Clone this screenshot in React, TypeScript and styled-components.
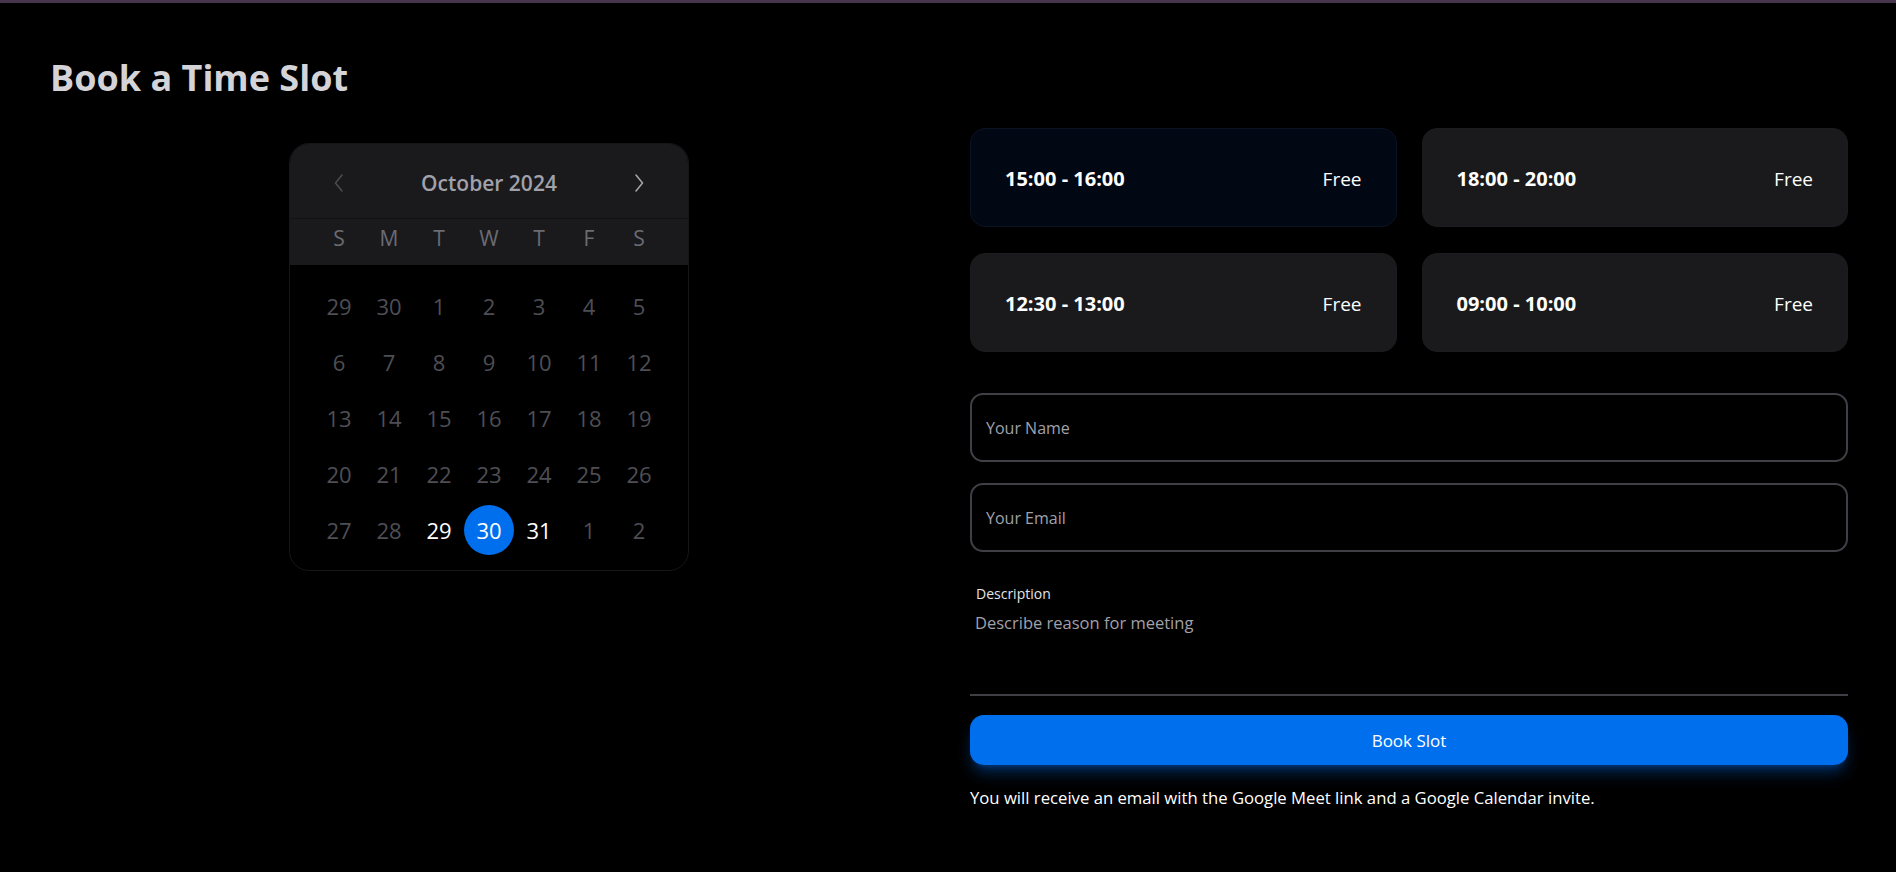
import React from "react";
import styled, { createGlobalStyle } from "styled-components";

const Global = createGlobalStyle`
  html, body { margin: 0; padding: 0; background: #000; }
  body { font-family: "Segoe UI", "Open Sans", "Noto Sans", sans-serif; color: #fff; }
  * { box-sizing: border-box; }
`;

const Page = styled.div`
  min-height: 872px;
  background: #000;
  border-top: 3px solid #47344d;
`;

const Container = styled.div`
  padding: 52px 48px 0 48px;
`;

const Title = styled.h1`
  margin: 0 0 27px 0;
  padding-left: 2px;
  font-size: 36px;
  line-height: 46px;
  font-weight: 700;
  color: #d4d4d8;
`;

const Columns = styled.div`
  display: grid;
  grid-template-columns: 882px 878px;
  column-gap: 40px;
`;

const LeftCol = styled.div`
  display: flex;
  justify-content: center;
  padding-top: 15px;
`;

const RightCol = styled.div`
  display: flex;
  flex-direction: column;
`;

const Calendar = styled.div`
  width: 400px;
  align-self: flex-start;
  border-radius: 20px;
  border: 1px solid #161618;
  overflow: hidden;
  background: #000;
`;

const CalHeader = styled.div`
  background: #1a1a1c;
`;

const Grid7 = styled.div`
  display: grid;
  grid-template-columns: repeat(7, 50px);
  padding: 0 24px;
`;

const MonthRow = styled(Grid7)`
  height: 75px;
  padding-top: 3px;
  align-items: center;
  border-bottom: 1px solid #121214;
`;

const NavButton = styled.button<{ $dim?: boolean }>`
  display: flex;
  align-items: center;
  justify-content: center;
  background: none;
  border: none;
  padding: 0;
  height: 40px;
  color: ${(p) => (p.$dim ? "#4a4a50" : "#a1a1aa")};
  cursor: pointer;
`;

const MonthLabel = styled.div`
  grid-column: 2 / 7;
  text-align: center;
  font-size: 21px;
  font-weight: 600;
  color: #a1a1aa;
`;

const WeekRow = styled(Grid7)`
  height: 46px;
  padding-bottom: 9px;
  align-items: center;
`;

const WeekDay = styled.div`
  text-align: center;
  font-size: 21px;
  color: #6b6b73;
`;

const DaysGrid = styled(Grid7)`
  padding-top: 16px;
  padding-bottom: 15px;
  grid-auto-rows: 50px;
  row-gap: 6px;
`;

const Day = styled.div<{ $state: "muted" | "active" | "selected" }>`
  width: 50px;
  height: 50px;
  border-radius: 50%;
  display: flex;
  align-items: center;
  justify-content: center;
  font-size: 22px;
  color: ${(p) => (p.$state === "muted" ? "#4e4e55" : "#ffffff")};
  background: ${(p) => (p.$state === "selected" ? "#006fee" : "transparent")};
`;

const SlotGrid = styled.div`
  display: grid;
  grid-template-columns: 1fr 1fr;
  column-gap: 25px;
  row-gap: 26px;
`;

const Slot = styled.div<{ $selected?: boolean }>`
  height: 99px;
  border-radius: 15px;
  display: flex;
  align-items: center;
  justify-content: space-between;
  padding: 2px 34px 0 34px;
  background: ${(p) => (p.$selected ? "#020813" : "#1a1a1c")};
  border: 1px solid ${(p) => (p.$selected ? "#0a1322" : "#1c1c1f")};
  cursor: pointer;
`;

const SlotTime = styled.span`
  font-size: 20px;
  font-weight: 700;
  color: #fff;
`;

const SlotStatus = styled.span`
  font-size: 19px;
  color: #fff;
`;

const Form = styled.form`
  margin-top: 41px;
  display: flex;
  flex-direction: column;
`;

const Input = styled.input`
  height: 69px;
  border: 2px solid #3f3f46;
  border-radius: 13px;
  background: transparent;
  padding: 0 14px;
  font-family: inherit;
  font-size: 16px;
  color: #fff;
  outline: none;
  & + & { margin-top: 21px; }
  &::placeholder { color: #a1a1aa; }
`;

const DescLabel = styled.label`
  margin-top: 32px;
  padding-left: 6px;
  font-size: 14px;
  line-height: 20px;
  color: #e4e4e7;
`;

const TextArea = styled.textarea`
  margin-top: 7px;
  height: 85px;
  border: none;
  border-bottom: 2px solid #3f3f46;
  background: transparent;
  padding: 0 5px;
  font-family: inherit;
  font-size: 16.5px;
  line-height: 24px;
  color: #fff;
  resize: none;
  outline: none;
  &::placeholder { color: #a1a1aa; }
`;

const BookButton = styled.button`
  margin-top: 19px;
  height: 50px;
  border: none;
  border-radius: 14px;
  background: #006fee;
  color: #fff;
  font-family: inherit;
  font-size: 17px;
  cursor: pointer;
  box-shadow: 0 10px 15px -3px rgba(0, 111, 238, 0.4), 0 4px 6px -4px rgba(0, 111, 238, 0.4);
`;

const Note = styled.p`
  margin: 21px 0 0 0;
  font-size: 16.7px;
  line-height: 24px;
  color: #fff;
`;

const Chevron = ({ dir }: { dir: "left" | "right" }) => (
  <svg width="10" height="18" viewBox="0 0 10 18" fill="none">
    <polyline
      points={dir === "left" ? "8,1 1.5,9 8,17" : "2,1 8.5,9 2,17"}
      stroke="currentColor"
      strokeWidth="1.6"
      strokeLinecap="round"
      strokeLinejoin="round"
    />
  </svg>
);

type DayState = "muted" | "active" | "selected";

const weeks: [number, DayState][][] = [
  [29, 30, 1, 2, 3, 4, 5].map((d) => [d, "muted"] as [number, DayState]),
  [6, 7, 8, 9, 10, 11, 12].map((d) => [d, "muted"] as [number, DayState]),
  [13, 14, 15, 16, 17, 18, 19].map((d) => [d, "muted"] as [number, DayState]),
  [20, 21, 22, 23, 24, 25, 26].map((d) => [d, "muted"] as [number, DayState]),
  [
    [27, "muted"],
    [28, "muted"],
    [29, "active"],
    [30, "selected"],
    [31, "active"],
    [1, "muted"],
    [2, "muted"],
  ],
];

const slots = [
  { time: "15:00 - 16:00", selected: true },
  { time: "18:00 - 20:00" },
  { time: "12:30 - 13:00" },
  { time: "09:00 - 10:00" },
];

export default function App() {
  return (
    <Page>
      <Global />
      <Container>
        <Title>Book a Time Slot</Title>
        <Columns>
          <LeftCol>
            <Calendar>
              <CalHeader>
                <MonthRow>
                  <NavButton $dim aria-label="Previous">
                    <Chevron dir="left" />
                  </NavButton>
                  <MonthLabel>October 2024</MonthLabel>
                  <NavButton aria-label="Next">
                    <Chevron dir="right" />
                  </NavButton>
                </MonthRow>
                <WeekRow>
                  {["S", "M", "T", "W", "T", "F", "S"].map((w, i) => (
                    <WeekDay key={i}>{w}</WeekDay>
                  ))}
                </WeekRow>
              </CalHeader>
              <DaysGrid>
                {weeks.flat().map(([d, s], i) => (
                  <Day key={i} $state={s}>
                    {d}
                  </Day>
                ))}
              </DaysGrid>
            </Calendar>
          </LeftCol>
          <RightCol>
            <SlotGrid>
              {slots.map((s) => (
                <Slot key={s.time} $selected={s.selected}>
                  <SlotTime>{s.time}</SlotTime>
                  <SlotStatus>Free</SlotStatus>
                </Slot>
              ))}
            </SlotGrid>
            <Form onSubmit={(e) => e.preventDefault()}>
              <Input placeholder="Your Name" />
              <Input placeholder="Your Email" />
              <DescLabel>Description</DescLabel>
              <TextArea placeholder="Describe reason for meeting" />
              <BookButton type="submit">Book Slot</BookButton>
              <Note>
                You will receive an email with the Google Meet link and a Google Calendar invite.
              </Note>
            </Form>
          </RightCol>
        </Columns>
      </Container>
    </Page>
  );
}
